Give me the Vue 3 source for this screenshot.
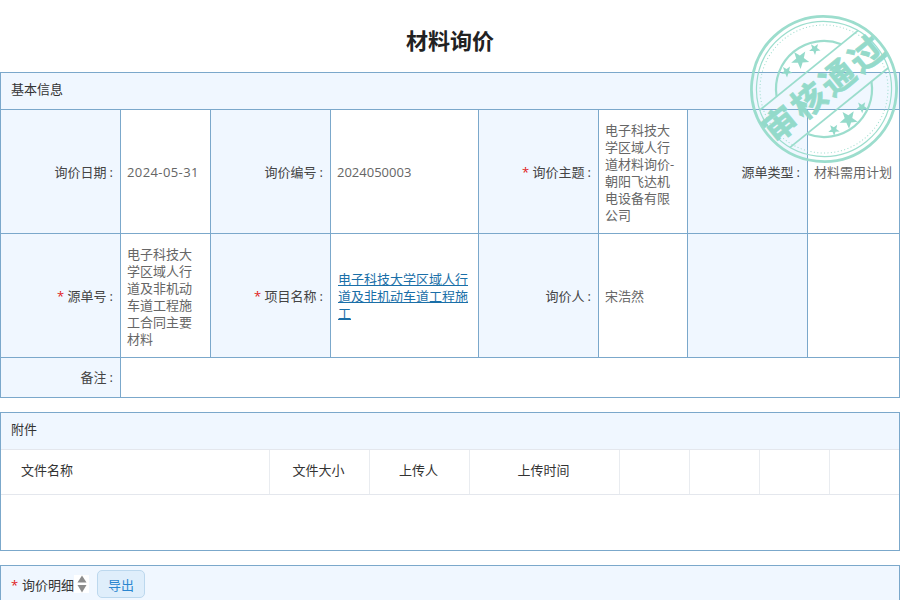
<script setup>
const rows = [
  { cells: [
    { label: '询价日期' }, { value: '2024-05-31', cls: 'date' },
    { label: '询价编号' }, { value: '2024050003' },
    { label: '询价主题', req: true }, { value: '电子科技大学区域人行道材料询价-朝阳飞达机电设备有限公司' },
    { label: '源单类型' }, { value: '材料需用计划' },
  ] },
  { cells: [
    { label: '源单号', req: true }, { value: '电子科技大学区域人行道及非机动车道工程施工合同主要材料' },
    { label: '项目名称', req: true }, { link: '电子科技大学区域人行道及非机动车道工程施工' },
    { label: '询价人' }, { value: '宋浩然' },
    { label: '' }, { value: '' },
  ] },
]
const fileCols = [
  { name: '文件名称', cls: 'fc-name' },
  { name: '文件大小', cls: 'fc-size' },
  { name: '上传人', cls: 'fc-size' },
  { name: '上传时间', cls: 'fc-time' },
  { name: '', cls: 'fc-x' },
  { name: '', cls: 'fc-x' },
  { name: '', cls: 'fc-x' },
  { name: '', cls: 'fc-last' },
]
const star = (cx, cy, r) => {
  const p = []
  for (let i = 0; i < 10; i++) {
    const a = -Math.PI / 2 + (i * Math.PI) / 5
    const q = i % 2 ? r * 0.42 : r
    p.push((cx + q * Math.cos(a)).toFixed(2) + ',' + (cy + q * Math.sin(a)).toFixed(2))
  }
  return p.join(' ')
}
const stars = [
  star(0, -38, 9.5), star(-18, -37, 6), star(18, -37, 6),
  star(0, 39, 9.5), star(-18, 38, 6), star(18, 38, 6),
]
</script>

<template>
  <div class="page">
    <h1 class="title">材料询价</h1>

    <section class="panel">
      <div class="panel-head">基本信息</div>
      <table class="info">
        <colgroup>
          <col class="c1" /><col class="c2" /><col class="c1" /><col class="c4" />
          <col class="c1" /><col class="c6" /><col class="c1" /><col class="c8" />
        </colgroup>
        <tbody>
          <tr v-for="(row, ri) in rows" :key="ri" class="row-main">
            <template v-for="(c, ci) in row.cells" :key="ci">
              <td v-if="c.label !== undefined" class="lab">
                <template v-if="c.label">
                  <span v-if="c.req" class="req">* </span>{{ c.label }}<span class="colon">:</span>
                </template>
              </td>
              <td v-else class="val" :class="c.cls">
                <a v-if="c.link" class="link">{{ c.link }}</a>
                <template v-else>{{ c.value }}</template>
              </td>
            </template>
          </tr>
          <tr class="row-note">
            <td class="lab">备注<span class="colon">:</span></td>
            <td class="val" colspan="7"></td>
          </tr>
        </tbody>
      </table>
    </section>

    <section class="panel files">
      <div class="panel-head">附件</div>
      <div class="file-head">
        <div v-for="(f, i) in fileCols" :key="i" class="fc" :class="f.cls">{{ f.name }}</div>
      </div>
    </section>

    <section class="panel detail">
      <div class="panel-head detail-head">
        <span class="req">*</span>
        <span class="detail-name">询价明细</span>
        <span class="sort">
          <svg width="10" height="18" viewBox="0 0 10 18">
            <path d="M5 0.5 L9.5 7.5 H0.5 Z" fill="#8c8c8c" />
            <path d="M0.5 10 H9.5 L5 17.5 Z" fill="#8c8c8c" />
          </svg>
        </span>
        <button class="export" type="button">导出</button>
      </div>
    </section>

    <svg class="stamp" width="160" height="160" viewBox="-80 -80 160 160">
      <g transform="rotate(-39)" fill="none" stroke="#97dccb">
        <circle r="72.5" stroke-width="2.8" />
        <circle r="67.5" stroke-width="1.2" />
        <circle r="64" stroke-width="1" stroke-dasharray="1 2.4" />
        <path d="M-41.6 -24 A48 48 0 0 1 41.6 -24" stroke-width="2.2" />
        <path d="M41.6 24 A48 48 0 0 1 -41.6 24" stroke-width="2.2" />
        <path d="M-63.5 -24 H63.5" stroke-width="1.8" />
        <path d="M-63.5 24 H63.5" stroke-width="1.8" />
        <polygon v-for="(s, i) in stars" :key="i" :points="s" fill="#8fd9c8" stroke="none" />
        <text class="stamp-text" x="1" y="12" text-anchor="middle" fill="#8fd9c8" stroke="#8fd9c8" stroke-width="0.7">审核通过</text>
      </g>
    </svg>
  </div>
</template>

<style scoped>
.page {
  position: relative;
  width: 900px;
  height: 600px;
  overflow: hidden;
  background: #fff;
  font-family: "Open Sans", "Noto Sans CJK SC", sans-serif;
  font-size: 13px;
  color: #333;
}
.title {
  margin: 0;
  height: 72px;
  line-height: 81px;
  text-align: center;
  font-size: 22px;
  font-weight: 700;
  color: #222;
}
.panel {
  border: 1px solid #7ba8cb;
  margin-bottom: 14px;
  background: #fff;
}
.panel-head {
  height: 36px;
  line-height: 32px;
  padding-left: 10px;
  background: #f0f7ff;
  color: #333;
}
.info {
  width: 898px;
  table-layout: fixed;
  border-collapse: separate;
  border-spacing: 0;
}
.c1 { width: 120px; }
.c2 { width: 90px; }
.c4 { width: 148px; }
.c6 { width: 89px; }
.c8 { width: 91px; }
.info td {
  border-top: 1px solid #7ba8cb;
  border-right: 1px solid #7ba8cb;
  line-height: 17px;
  vertical-align: middle;
  word-break: break-all;
}
.info td:last-child { border-right: none; }
.row-main td { box-sizing: border-box; height: 124px; padding-top: 2px; }
.row-note td { height: 40px; box-sizing: border-box; }
.lab {
  background: #f0f7ff;
  text-align: right;
  padding: 0 7px 0 0;
  color: #444;
}
.val {
  padding: 0 6px;
  color: #666;
}
.date { letter-spacing: 0.4px; }
.colon { margin-left: 3px; }
.req { color: #e02020; }
.link {
  display: block;
  padding-left: 1px;
  color: #1a6fa8;
  text-decoration: underline;
}
.file-head {
  display: flex;
  box-sizing: border-box;
  height: 46px;
  margin-bottom: 55px;
  border-top: 1px solid #e4e7ed;
  border-bottom: 1px solid #e4e7ed;
}
.fc {
  display: flex;
  flex: none;
  align-items: center;
  justify-content: center;
  box-sizing: border-box;
  padding-bottom: 5px;
  border-right: 1px solid #e9ecf0;
  color: #333;
}
.fc:last-child { border-right: none; }
.fc-name { width: 269px; justify-content: flex-start; padding-left: 20px; }
.fc-size { width: 100px; padding-right: 2px; }
.fc-time { width: 150px; padding-right: 2px; }
.fc-x { width: 70px; }
.fc-last { width: 69px; }
.detail { margin-bottom: 0; }
.detail-head {
  height: 60px;
  display: flex;
  align-items: flex-start;
  padding-top: 4px;
  line-height: 28px;
  box-sizing: border-box;
}
.detail-head .req { width: 11px; padding-top: 1px; }
.detail-name { padding-top: 1px; }
.sort {
  width: 15px;
  height: 18px;
  margin-top: 5px;
  background: #fff;
  display: flex;
  justify-content: center;
}
.export {
  width: 48px;
  height: 28px;
  margin-left: 8px;
  padding: 0 0 4px;
  border: 1px solid #bcd8ee;
  border-radius: 5px;
  background: #dfeefb;
  color: #2a86d0;
  font: inherit;
}
.stamp {
  position: absolute;
  left: 744px;
  top: 9px;
  opacity: 0.95;
  pointer-events: none;
}
.stamp-text {
  font-family: "Noto Sans CJK SC", sans-serif;
  font-size: 34px;
  font-weight: 700;
  letter-spacing: 3px;
}
</style>

<style>
html, body { margin: 0; overflow: hidden; }
</style>
